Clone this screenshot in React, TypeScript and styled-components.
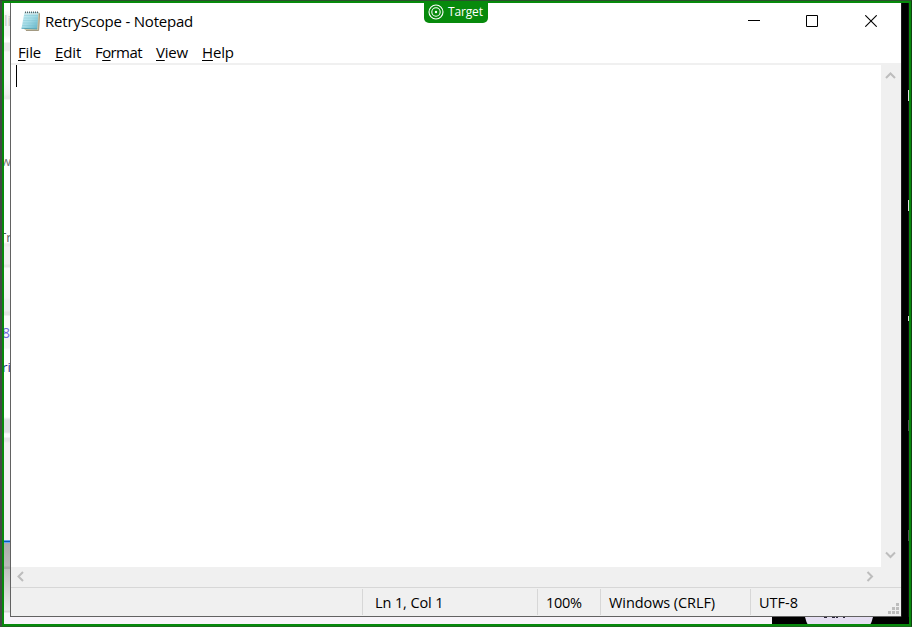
import React from "react";
import styled, { createGlobalStyle } from "styled-components";

const GlobalStyle = createGlobalStyle`
  * { box-sizing: border-box; }
  html, body { margin: 0; padding: 0; overflow: hidden; }
  body { font-family: "Open Sans", "Noto Sans", sans-serif; color: #000; }
`;

const Desktop = styled.div`
  position: relative;
  width: 912px;
  height: 627px;
  overflow: hidden;
  display: grid;
  grid-template-columns: 10px 891px 11px;
  grid-template-rows: 617px 10px;
  background: #000;
`;

const LeftPage = styled.div`
  position: relative;
  overflow: hidden;
  background: linear-gradient(
    #fff 0 10px, #f4f4f4 16px 35px, #fff 40px 42px, #e9e9e9 43px 50px, #f8f8f8 52px 80px,
    #f0eff0 94px, #e7e7e7 97px 99px, #fff 100px 242px, #ebe9eb 244px 246px, #f1eff1 247px 264px,
    #e6e6e6 265px 267px, #faf9fa 268px, #f4f2f5 298px, #ededee 300px 311px, #e4e4e4 312px 315px,
    #fbfafb 316px 337px, #f5f3f5 338px 348px, #fff 350px 417px, #dedfe4 420px 432px,
    #fafafe 434px 437px, #e6e5ea 438px 441px, #f2f0f3 443px 540px,
    #66a3f0 540px 541px, #075bb9 541px 542px, #62a5f8 542px 543px,
    #adadad 543px, #bbb 566px, #a9a9a9 567px 569px, #c1c1c1 569px, #e9e9e9 610px,
    #d7d7d7 611px 612px, #f7f4f9 613px
  );
`;

const Fragment = styled.span<{ $x: number; $y: number; $color: string; $size?: number }>`
  position: absolute;
  left: ${(p) => p.$x}px;
  top: ${(p) => p.$y}px;
  color: ${(p) => p.$color};
  font-size: ${(p) => p.$size ?? 14}px;
  line-height: 16px;
  white-space: nowrap;
`;

const RightPage = styled.div`
  position: relative;
  overflow: hidden;
  background: linear-gradient(90deg, #1c1c1c 0 1px, #000 1px 7px, #101010 7px);
`;

const Sliver = styled.i<{ $y: number; $color: string; $h?: number }>`
  position: absolute;
  left: 7px;
  top: ${(p) => p.$y}px;
  width: 1px;
  height: ${(p) => p.$h ?? 11}px;
  background: ${(p) => p.$color};
`;

const BottomPage = styled.div`
  grid-column: 1 / -1;
  display: flex;
  overflow: hidden;
  background: #000;
`;

const PageFooter = styled.div`
  flex: 0 0 772px;
  background: #f7f4f9;
`;

const Window = styled.main`
  display: grid;
  grid-template-rows: 37px 25px 502px 20px 29px;
  grid-template-columns: minmax(0, 1fr);
  height: 614px;
  margin-top: 3px;
  border-left: 1px solid #626262;
  border-bottom: 1px solid #626262;
  background: #fff;
`;

const TitleBar = styled.header`
  display: flex;
  align-items: center;
  height: 36px;
  padding-left: 9px;
`;

const Title = styled.h1`
  margin: 0 auto 0 3px;
  font-size: 15px;
  font-weight: 400;
  line-height: 20px;
  letter-spacing: -0.2px;
  white-space: nowrap;
`;

const Caption = styled.div`
  display: flex;
  margin-right: 1px;
`;

const CaptionButton = styled.button`
  width: 58.5px;
  height: 36px;
  padding: 0;
  border: 0;
  background: transparent;
  display: grid;
  place-items: center;
`;

const MenuBar = styled.nav`
  display: flex;
  padding: 1px 0 0 7px;
  border-bottom: 2px solid #f0f0f0;
`;

const MenuItem = styled.span<{ $width: number; $spacing?: number }>`
  flex: 0 0 ${(p) => p.$width}px;
  font-size: 15px;
  line-height: 22px;
  letter-spacing: ${(p) => p.$spacing ?? 0}px;
  white-space: nowrap;

  u {
    text-underline-offset: 2px;
    text-decoration-thickness: 1px;
    text-decoration-skip-ink: none;
  }
`;

const Editor = styled.section`
  display: flex;
  justify-content: space-between;
`;

const Caret = styled.div`
  width: 1px;
  height: 22px;
  margin-left: 5px;
  background: #000;
`;

const VerticalBar = styled.div`
  width: 20px;
  display: flex;
  flex-direction: column;
  align-items: flex-start;
  justify-content: space-between;
  padding: 7px 0 8px 4px;
  background: #f0f0f0;
`;

const HorizontalBar = styled.div`
  display: flex;
  justify-content: space-between;
  align-items: center;
  padding: 0 27px 2px 6px;
  background: #f0f0f0;
`;

const StatusBar = styled.footer`
  display: flex;
  border-top: 1px solid #d7d7d7;
  background: #f0f0f0;
  position: relative;
`;

const StatusCell = styled.span<{ $width: number; $pad?: number; $spacing?: number }>`
  flex: 0 0 ${(p) => p.$width}px;
  height: 26px;
  margin-top: 1px;
  padding-left: ${(p) => p.$pad ?? 8}px;
  border-right: 1px solid #d7d7d7;
  font-size: 14.5px;
  line-height: 27px;
  letter-spacing: ${(p) => p.$spacing ?? 0}px;
  white-space: nowrap;

  &:last-of-type { border-right: 0; }
`;

const Grip = styled.svg`
  position: absolute;
  right: 2px;
  bottom: 2px;
`;

const CaptureFrame = styled.div`
  position: absolute;
  inset: 0;
  border-style: solid;
  border-color: #2c502d #104413 #1d681f #444844;
  border-width: 1px 1px 1px 2px;

  &::after {
    content: "";
    position: absolute;
    inset: 0;
    border: 2px solid #078a0c;
  }
`;

const TargetTag = styled.div`
  position: absolute;
  left: 424px;
  top: 2px;
  width: 64px;
  height: 21px;
  display: flex;
  align-items: center;
  gap: 4px;
  padding: 0 0 2px 4px;
  border-radius: 0 0 5px 5px;
  background: #078a0c;
  color: #fff;
  font-size: 12px;
  line-height: 18px;
  letter-spacing: -0.15px;
`;

const chevrons = {
  up: "M1 6 L5.5 1.5 L10 6",
  down: "M1 1.5 L5.5 6 L10 1.5",
  left: "M6 1 L1.5 5.5 L6 10",
  right: "M1.5 1 L6 5.5 L1.5 10",
};

function Chevron({ dir }: { dir: keyof typeof chevrons }) {
  const vertical = dir === "up" || dir === "down";
  return (
    <svg width={vertical ? 11 : 8} height={vertical ? 8 : 11} fill="none" stroke="#bdbdbd" strokeWidth="2">
      <path d={chevrons[dir]} />
    </svg>
  );
}

function NotepadIcon() {
  return (
    <svg width="22" height="22" viewBox="0 0 22 22">
      <defs>
        <linearGradient id="paper" x1="0" y1="0" x2="1" y2="1">
          <stop offset="0" stopColor="#d2f1f5" />
          <stop offset=".5" stopColor="#a5dbe6" />
          <stop offset="1" stopColor="#5fb3c8" />
        </linearGradient>
      </defs>
      <path d="M17 2 L20 3 L19 20.5 L6 20.5 L4 19" fill="#d4c7a5" />
      <path d="M19.5 3.5 L18.6 20.5 H6" fill="none" stroke="#a39a82" />
      <path d="M4.5 2 H18.5 L17.2 19 L1.5 18.3 Z" fill="url(#paper)" />
      <path d="M4 5.5 H18 M3.8 8 H17.8 M3.2 10.5 H17.6 M2.8 13 H17.4 M2.3 15.5 H17.2" stroke="#78bfce" strokeWidth=".35" />
      <path d="M1.5 18.3 L17.2 19" stroke="#4098ae" strokeWidth=".8" />
      <path d="M5 2.5 H18" stroke="#596265" strokeWidth="2" strokeDasharray="1 1" />
      <path d="M4.5 3.8 H18" stroke="#d9e7e8" strokeWidth="1" />
    </svg>
  );
}

const menus = [
  { before: "", key: "F", after: "ile", width: 37, spacing: -0.2 },
  { before: "", key: "E", after: "dit", width: 40, spacing: -0.1 },
  { before: "F", key: "o", after: "rmat", width: 61, spacing: -0.6 },
  { before: "", key: "V", after: "iew", width: 46, spacing: -0.2 },
  { before: "", key: "H", after: "elp", width: 40, spacing: -0.15 },
];

const gripDots = [[8, 0], [4, 4], [8, 4], [0, 8], [4, 8], [8, 8]];

export default function App() {
  return (
    <Desktop>
      <GlobalStyle />
      <LeftPage>
        <Fragment $x={4} $y={13} $color="#c7c7c7">li</Fragment>
        <Fragment $x={1} $y={153} $color="#777" $size={13}>w</Fragment>
        <Fragment $x={-1} $y={229} $color="#555" $size={13}>Tr</Fragment>
        <Fragment $x={2} $y={325} $color="#6b6bdc">8</Fragment>
        <Fragment $x={2} $y={359} $color="#302a85" $size={13.5}>ri</Fragment>
      </LeftPage>
      <Window>
        <TitleBar>
          <NotepadIcon />
          <Title>RetryScope - Notepad</Title>
          <Caption>
            <CaptionButton aria-label="Minimize">
              <svg width="12" height="12"><path d="M0 5.5H12" stroke="#000" /></svg>
            </CaptionButton>
            <CaptionButton aria-label="Maximize">
              <svg width="12" height="12"><path d="M.5.5H11.5V11.5H.5Z" fill="none" stroke="#000" /></svg>
            </CaptionButton>
            <CaptionButton aria-label="Close">
              <svg width="12" height="12"><path d="M.3.3 11.7 11.7M11.7.3.3 11.7" stroke="#000" strokeWidth="1.1" /></svg>
            </CaptionButton>
          </Caption>
        </TitleBar>
        <MenuBar>
          {menus.map((m) => (
            <MenuItem key={m.key} $width={m.width} $spacing={m.spacing}>
              {m.before}<u>{m.key}</u>{m.after}
            </MenuItem>
          ))}
        </MenuBar>
        <Editor>
          <Caret />
          <VerticalBar>
            <Chevron dir="up" />
            <Chevron dir="down" />
          </VerticalBar>
        </Editor>
        <HorizontalBar>
          <Chevron dir="left" />
          <Chevron dir="right" />
        </HorizontalBar>
        <StatusBar>
          <StatusCell $width={352} />
          <StatusCell $width={175} $pad={12} $spacing={-0.1}>Ln 1, Col 1</StatusCell>
          <StatusCell $width={63} $spacing={-0.3}>100%</StatusCell>
          <StatusCell $width={150} $spacing={-0.08}>Windows (CRLF)</StatusCell>
          <StatusCell $width={100}>UTF-8</StatusCell>
          <Grip width="11" height="11">
            {gripDots.map(([x, y]) => (
              <rect key={`${x}-${y}`} x={x} y={y} width="3" height="3" fill="#bdbdbd" />
            ))}
          </Grip>
        </StatusBar>
      </Window>
      <RightPage>
        <Sliver $y={90} $color="#dedede" />
        <Sliver $y={200} $color="#dedede" />
        <Sliver $y={316} $color="#dedede" $h={5} />
        <Sliver $y={420} $color="#555" />
        <Sliver $y={530} $color="#555" />
      </RightPage>
      <BottomPage>
        <PageFooter />
        <svg width="140" height="10">
          <path d="M33 0H101Q100 5 97 10H37Q34 5 33 0Z" fill="#e5dff2" />
          <path d="M52 0h3v1h-3zM60 0h3v1h-3zM64 0h2v1h-2zM71 0h2v1h-2z" fill="#282438" />
        </svg>
      </BottomPage>
      <CaptureFrame />
      <TargetTag>
        <svg width="16" height="16" fill="none" stroke="#fff" strokeWidth="1.1">
          <circle cx="8" cy="8" r="7" />
          <circle cx="8" cy="8" r="4.2" />
          <circle cx="8" cy="8" r="1.2" fill="#fff" stroke="none" />
        </svg>
        Target
      </TargetTag>
    </Desktop>
  );
}
